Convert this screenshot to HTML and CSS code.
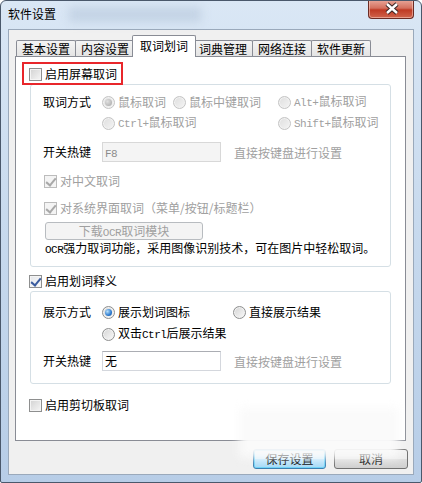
FILE: index.html
```html
<!DOCTYPE html>
<html lang="zh-CN">
<head>
    <meta charset="UTF-8">
    <title>软件设置</title>
    <link rel="stylesheet" href="styles.css">
</head>
<body>
    <div class="window">
        <div class="titlebar">
            <span class="title">软件设置</span>
            <span class="close">
                <svg width="46" height="19" viewBox="0 0 46 19">
                    <path d="M18 5 L28 14 M28 5 L18 14" stroke="#3b2626" stroke-width="4.5" fill="none"/>
                    <path d="M18 5 L28 14 M28 5 L18 14" stroke="#fff" stroke-width="2.4" fill="none"/>
                </svg>
            </span>
        </div>
        <div class="client">
            <div class="tabs">
                <div class="tab">基本设置</div>
                <div class="tab">内容设置</div>
                <div class="tab active">取词划词</div>
                <div class="tab">词典管理</div>
                <div class="tab">网络连接</div>
                <div class="tab">软件更新</div>
            </div>
            <div class="panel">
                <div class="mark">
                    <span class="check"><span class="cb"></span><span>启用屏幕取词</span></span>
                </div>
                <div class="group group-ocr">
                    <div class="field">
                        <span class="label">取词方式</span>
                        <div class="options options-3">
                            <span class="radio off"><span class="rb sel"></span><span>鼠标取词</span></span>
                            <span class="radio off"><span class="rb"></span><span>鼠标中键取词</span></span>
                            <span class="radio off"><span class="rb"></span><span><span class="en">Alt+</span>鼠标取词</span></span>
                            <span class="radio off"><span class="rb"></span><span><span class="en">Ctrl+</span>鼠标取词</span></span>
                            <span></span>
                            <span class="radio off"><span class="rb"></span><span><span class="en">Shift+</span>鼠标取词</span></span>
                        </div>
                    </div>
                    <div class="field hotkey-row">
                        <span class="label">开关热键</span>
                        <span class="hotkey off"><span class="en">F8</span></span>
                        <span class="hint">直接按键盘进行设置</span>
                    </div>
                    <span class="check inner off first"><span class="cb on"></span><span>对中文取词</span></span>
                    <span class="check inner off"><span class="cb on"></span><span>对系统界面取词（菜单/按钮/标题栏）</span></span>
                    <div class="btn-ocr">下载<span class="en">OCR</span>取词模块</div>
                    <div class="desc"><span class="en">OCR</span>强力取词功能，采用图像识别技术，可在图片中轻松取词。</div>
                </div>
                <span class="check top-check explain"><span class="cb on"></span><span>启用划词释义</span></span>
                <div class="group group-show">
                    <div class="field">
                        <span class="label">展示方式</span>
                        <div class="options options-2">
                            <span class="radio"><span class="rb sel"></span><span>展示划词图标</span></span>
                            <span class="radio"><span class="rb"></span><span>直接展示结果</span></span>
                            <span class="radio"><span class="rb"></span><span>双击<span class="en">Ctrl</span>后展示结果</span></span>
                        </div>
                    </div>
                    <div class="field hotkey-row">
                        <span class="label">开关热键</span>
                        <span class="hotkey">无</span>
                        <span class="hint">直接按键盘进行设置</span>
                    </div>
                </div>
                <span class="check top-check clip"><span class="cb"></span><span>启用剪切板取词</span></span>
            </div>
            <div class="actions">
                <button class="btn default">保存设置</button>
                <button class="btn">取消</button>
            </div>
        </div>
        <div class="smudge smudge-title"></div>
        <div class="smudge smudge-bottom"></div>
    </div>
</body>
</html>
```

FILE: styles.css
```css
* {
    box-sizing: border-box;
}
body {
    margin: 0;
    font-family: "Noto Sans CJK SC", "Noto Sans", sans-serif;
    font-size: 12px;
    color: #000;
}
.en {
    font-family: "Liberation Mono", monospace;
    font-size: 11px;
    letter-spacing: -0.5px;
}

/* window frame */
.window {
    position: relative;
    width: 422px;
    height: 483px;
    border: 1px solid #4a586b;
    border-radius: 6px 6px 2px 2px;
    background: linear-gradient(#dae7f5, #c8daee 45%, #b7cde7);
    padding: 0 7px 7px;
    display: flex;
    flex-direction: column;
    overflow: hidden;
}
.titlebar {
    height: 28px;
    display: flex;
    align-items: flex-start;
}
.title {
    margin-top: 5px;
    line-height: 16px;
}
.close {
    margin-left: auto;
    margin-top: -1px;
    width: 46px;
    height: 19px;
    border: 1px solid #6b2b24;
    border-top: none;
    border-radius: 0 0 4px 4px;
    background: linear-gradient(#e9a79a, #d4705e 45%, #bf3a24 55%, #d0644c);
    box-shadow: inset 0 0 0 1px rgba(255, 220, 210, 0.5);
}
.close svg {
    display: block;
    margin-top: -1px;
}
.client {
    flex: 1;
    border: 1px solid #9aa9bb;
    background: #f0f0f0;
    display: flex;
    flex-direction: column;
}

/* tabs */
.tabs {
    height: 26px;
    padding-left: 7px;
    display: flex;
    align-items: flex-end;
}
.tab {
    width: 60px;
    height: 16px;
    margin-right: -1px;
    border: 1px solid #898c95;
    border-bottom: none;
    border-radius: 2px 2px 0 0;
    background: linear-gradient(#f4f4f4, #e4e4e4);
    text-align: center;
    line-height: 15px;
}
.tab.active {
    position: relative;
    z-index: 1;
    width: 64px;
    height: 22px;
    margin: 0 -3px -1px -2px;
    background: #fff;
    line-height: 19px;
}
.panel {
    margin-left: 6px;
    width: 391px;
    height: 385px;
    border: 1px solid #898c95;
    background: #fff;
    display: flex;
    flex-direction: column;
    align-items: flex-start;
}

/* check boxes and radios */
.check {
    display: flex;
    align-items: center;
    gap: 2px;
    height: 16px;
    line-height: 16px;
    white-space: nowrap;
}
.cb {
    flex-shrink: 0;
    width: 13px;
    height: 13px;
    margin-right: 1px;
    border: 1px solid #8e8f8f;
    background: linear-gradient(135deg, #d2d2d2, #f6f6f6);
    box-shadow: inset 0 0 0 1px #f4f4f4;
    position: relative;
}
.cb.on::after {
    content: "";
    position: absolute;
    left: 3px;
    top: 0px;
    width: 4px;
    height: 8px;
    border-right: 2px solid #3a5b9e;
    border-bottom: 2px solid #3a5b9e;
    transform: rotate(40deg);
}
.cb.on {
    background: linear-gradient(135deg, #e4e6ea, #fbfbfb);
}
.off {
    color: #a0a0a0;
}
.off .cb {
    border-color: #bcbcbc;
    background: #f4f4f4;
}
.off .cb.on::after {
    border-color: #a8a8a8;
}
.radio {
    display: flex;
    align-items: center;
    gap: 2px;
    height: 18px;
    line-height: 18px;
    white-space: nowrap;
}
.rb {
    flex-shrink: 0;
    width: 13px;
    height: 13px;
    border-radius: 50%;
    border: 1px solid #8e8f8f;
    background: linear-gradient(135deg, #d4d4d4, #fafafa);
    box-shadow: inset 0 0 0 1px #f2f2f2;
    margin-right: 1px;
    display: flex;
    align-items: center;
    justify-content: center;
}
.rb.sel::after {
    content: "";
    width: 7px;
    height: 7px;
    border-radius: 50%;
    background: radial-gradient(circle at 35% 35%, #b8e0fa, #2c7bd0 60%, #1a4f98);
}
.radio.off .rb {
    border-color: #c4c4c4;
    background: linear-gradient(135deg, #dedede, #f4f4f4);
}
.radio.off .rb.sel::after {
    background: radial-gradient(circle at 35% 35%, #e0e0e0, #a6a6a6);
}

/* red marker */
.mark {
    position: relative;
    z-index: 1;
    display: flex;
    align-items: center;
    width: 101px;
    height: 23px;
    margin: 5px 0 0 6px;
    padding: 1px 0 0 5px;
    border: 2px solid #e8262b;
}

/* group boxes */
.group {
    align-self: stretch;
    margin: 0 14px;
    border: 1px solid #d5dfe5;
    border-radius: 3px;
    padding-left: 12px;
    display: flex;
    flex-direction: column;
    align-items: flex-start;
}
.group-ocr {
    margin-top: -1px;
    padding-top: 8px;
    padding-bottom: 8px;
}
.group-show {
    margin-top: 2px;
    padding-top: 11px;
    padding-bottom: 12px;
}
.field {
    display: flex;
    align-items: flex-start;
}
.label {
    width: 59px;
    line-height: 18px;
}
.options {
    display: grid;
    grid-auto-rows: 18px;
}
.options-3 {
    grid-template-columns: 71px 105px auto;
    row-gap: 3px;
}
.options-2 {
    grid-template-columns: 131px auto;
    row-gap: 4px;
}
.hotkey-row {
    align-items: center;
    margin-top: 10px;
}
.group-show .hotkey-row {
    margin-top: 8px;
}
.hotkey {
    width: 119px;
    height: 20px;
    border: 1px solid #d4d7dd;
    border-top-color: #abadb3;
    padding-left: 2px;
    line-height: 18px;
}
.hotkey.off {
    background: #f4f4f4;
    border-color: #d8d8d8;
    color: #8c8c8c;
}
.hint {
    margin-left: 13px;
    color: #a0a0a0;
}
.check.inner {
    margin-left: 1px;
    margin-top: 11px;
}
.btn-ocr {
    margin: 6px 0 0 2px;
    width: 158px;
    height: 18px;
    border: 1px solid #b8bcc0;
    border-radius: 3px;
    background: #f4f4f4;
    color: #a0a0a0;
    text-align: center;
    line-height: 16px;
}
.desc {
    margin-left: 2px;
    line-height: 16px;
}
.top-check {
    margin-left: 13px;
}
.explain {
    margin-top: 6px;
}
.clip {
    margin-top: 13px;
}

/* dialog buttons */
.actions {
    display: flex;
    justify-content: flex-end;
    gap: 8px;
    padding: 8px 5px 0 0;
}
.btn {
    width: 74px;
    height: 20px;
    padding: 0;
    font-family: inherit;
    font-size: 12px;
    color: #000;
    border: 1px solid #707070;
    border-radius: 3px;
    background: linear-gradient(#f2f2f2, #ebebeb 50%, #dddddd 50%, #cfcfcf);
    line-height: 18px;
}
.btn.default {
    width: 73px;
    border-color: #3c7fb1;
    box-shadow: inset 0 0 0 1px #6fd3f7;
    background: linear-gradient(#eaf6fd, #d9f0fc 50%, #bee6fd 50%, #a7d9f5);
}

/* blurred watermark leftovers */
.smudge {
    position: absolute;
    filter: blur(5px);
}
.smudge-title {
    left: 68px;
    top: 6px;
    width: 132px;
    height: 15px;
    background: rgba(170, 188, 210, 0.45);
}
.smudge-bottom {
    left: 238px;
    top: 407px;
    width: 160px;
    height: 50px;
    background: rgba(250, 250, 250, 0.97);
}
```
